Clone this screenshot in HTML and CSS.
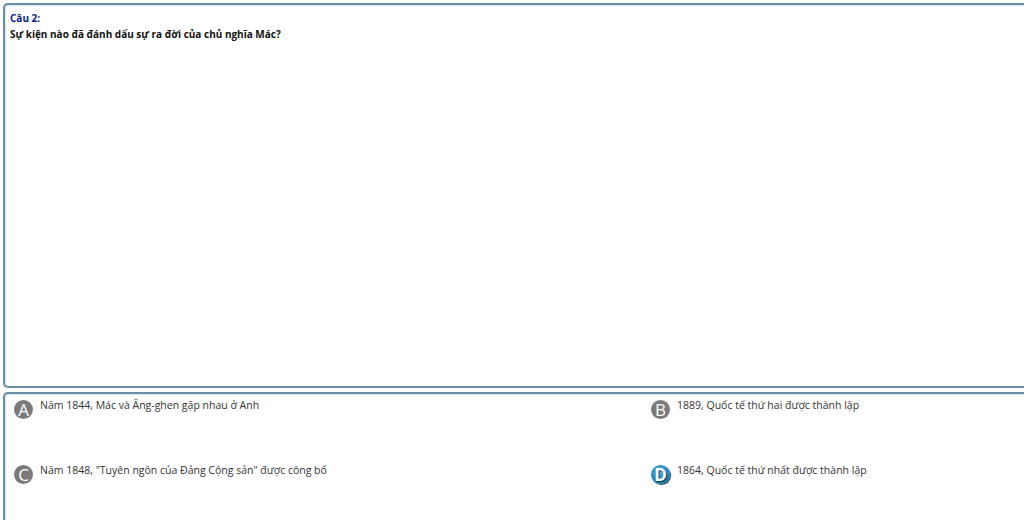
FILE: index.html
```html
<!DOCTYPE html>
<html lang="vi">
<head>
<meta charset="utf-8">
<link rel="stylesheet" href="styles.css">
</head>
<body>
<div class="page">
  <div class="question">
    <div class="qnum">Câu 2:</div>
    <div class="qtext">Sự kiện nào đã đánh dấu sự ra đời của chủ nghĩa Mác?</div>
  </div>
  <div class="answers">
    <div class="ans"><span class="badge">A</span><span class="atext">Năm 1844, Mác và Ăng-ghen gặp nhau ở Anh</span></div>
    <div class="ans"><span class="badge">B</span><span class="atext">1889, Quốc tế thứ hai được thành lập</span></div>
    <div class="ans"><span class="badge">C</span><span class="atext">Năm 1848, "Tuyên ngôn của Đảng Cộng sản" được công bố</span></div>
    <div class="ans"><span class="badge badge-sel">D</span><span class="atext">1864, Quốc tế thứ nhất được thành lập</span></div>
  </div>
</div>
</body>
</html>
```

FILE: styles.css
```css
html, body {
  margin: 0;
  padding: 0;
  background: #ffffff;
}
body {
  font-family: "Open Sans", "Noto Sans", sans-serif;
}
.page {
  padding: 3px 0 0 3px;
  display: flex;
  flex-direction: column;
  gap: 4px;
}
.question,
.answers {
  border: 2px solid #6a8da3;
  border-right: none;
  border-radius: 5px 0 0 5px;
  box-shadow: inset 1px 1px 0 #d6eef7;
  background: #ffffff;
}
.question {
  height: 385px;
  padding: 6px 0 0 5px;
  box-sizing: border-box;
}
.qnum {
  color: #0a1a8c;
  font-weight: bold;
  font-size: 10px;
  line-height: 15px;
}
.qtext {
  color: #111111;
  font-weight: bold;
  font-size: 10px;
  line-height: 16px;
}
.answers {
  height: 135px;
  box-sizing: border-box;
  padding: 4px 0 0 9px;
  display: grid;
  grid-template-columns: 637px 1fr;
  grid-auto-rows: 65px;
}
.ans {
  display: flex;
  align-items: flex-start;
  gap: 7px;
}
.badge {
  width: 19px;
  height: 19px;
  border-radius: 50%;
  background: #7a7a7a;
  color: #ffffff;
  font-family: "Open Sans", sans-serif;
  font-size: 17px;
  line-height: 19px;
  text-align: center;
  flex: none;
  margin-top: 2px;
}
.badge-sel {
  background: radial-gradient(circle at 40% 35%, #4fb2dc 0%, #1f86b8 55%, #0d5f8c 100%);
  box-shadow: 1px 1px 1px #0b3a55;
  text-shadow: 1px 1px 0 #0b3a55;
  font-weight: bold;
}
.atext {
  color: #333333;
  font-size: 10.5px;
  line-height: 14px;
}
```
